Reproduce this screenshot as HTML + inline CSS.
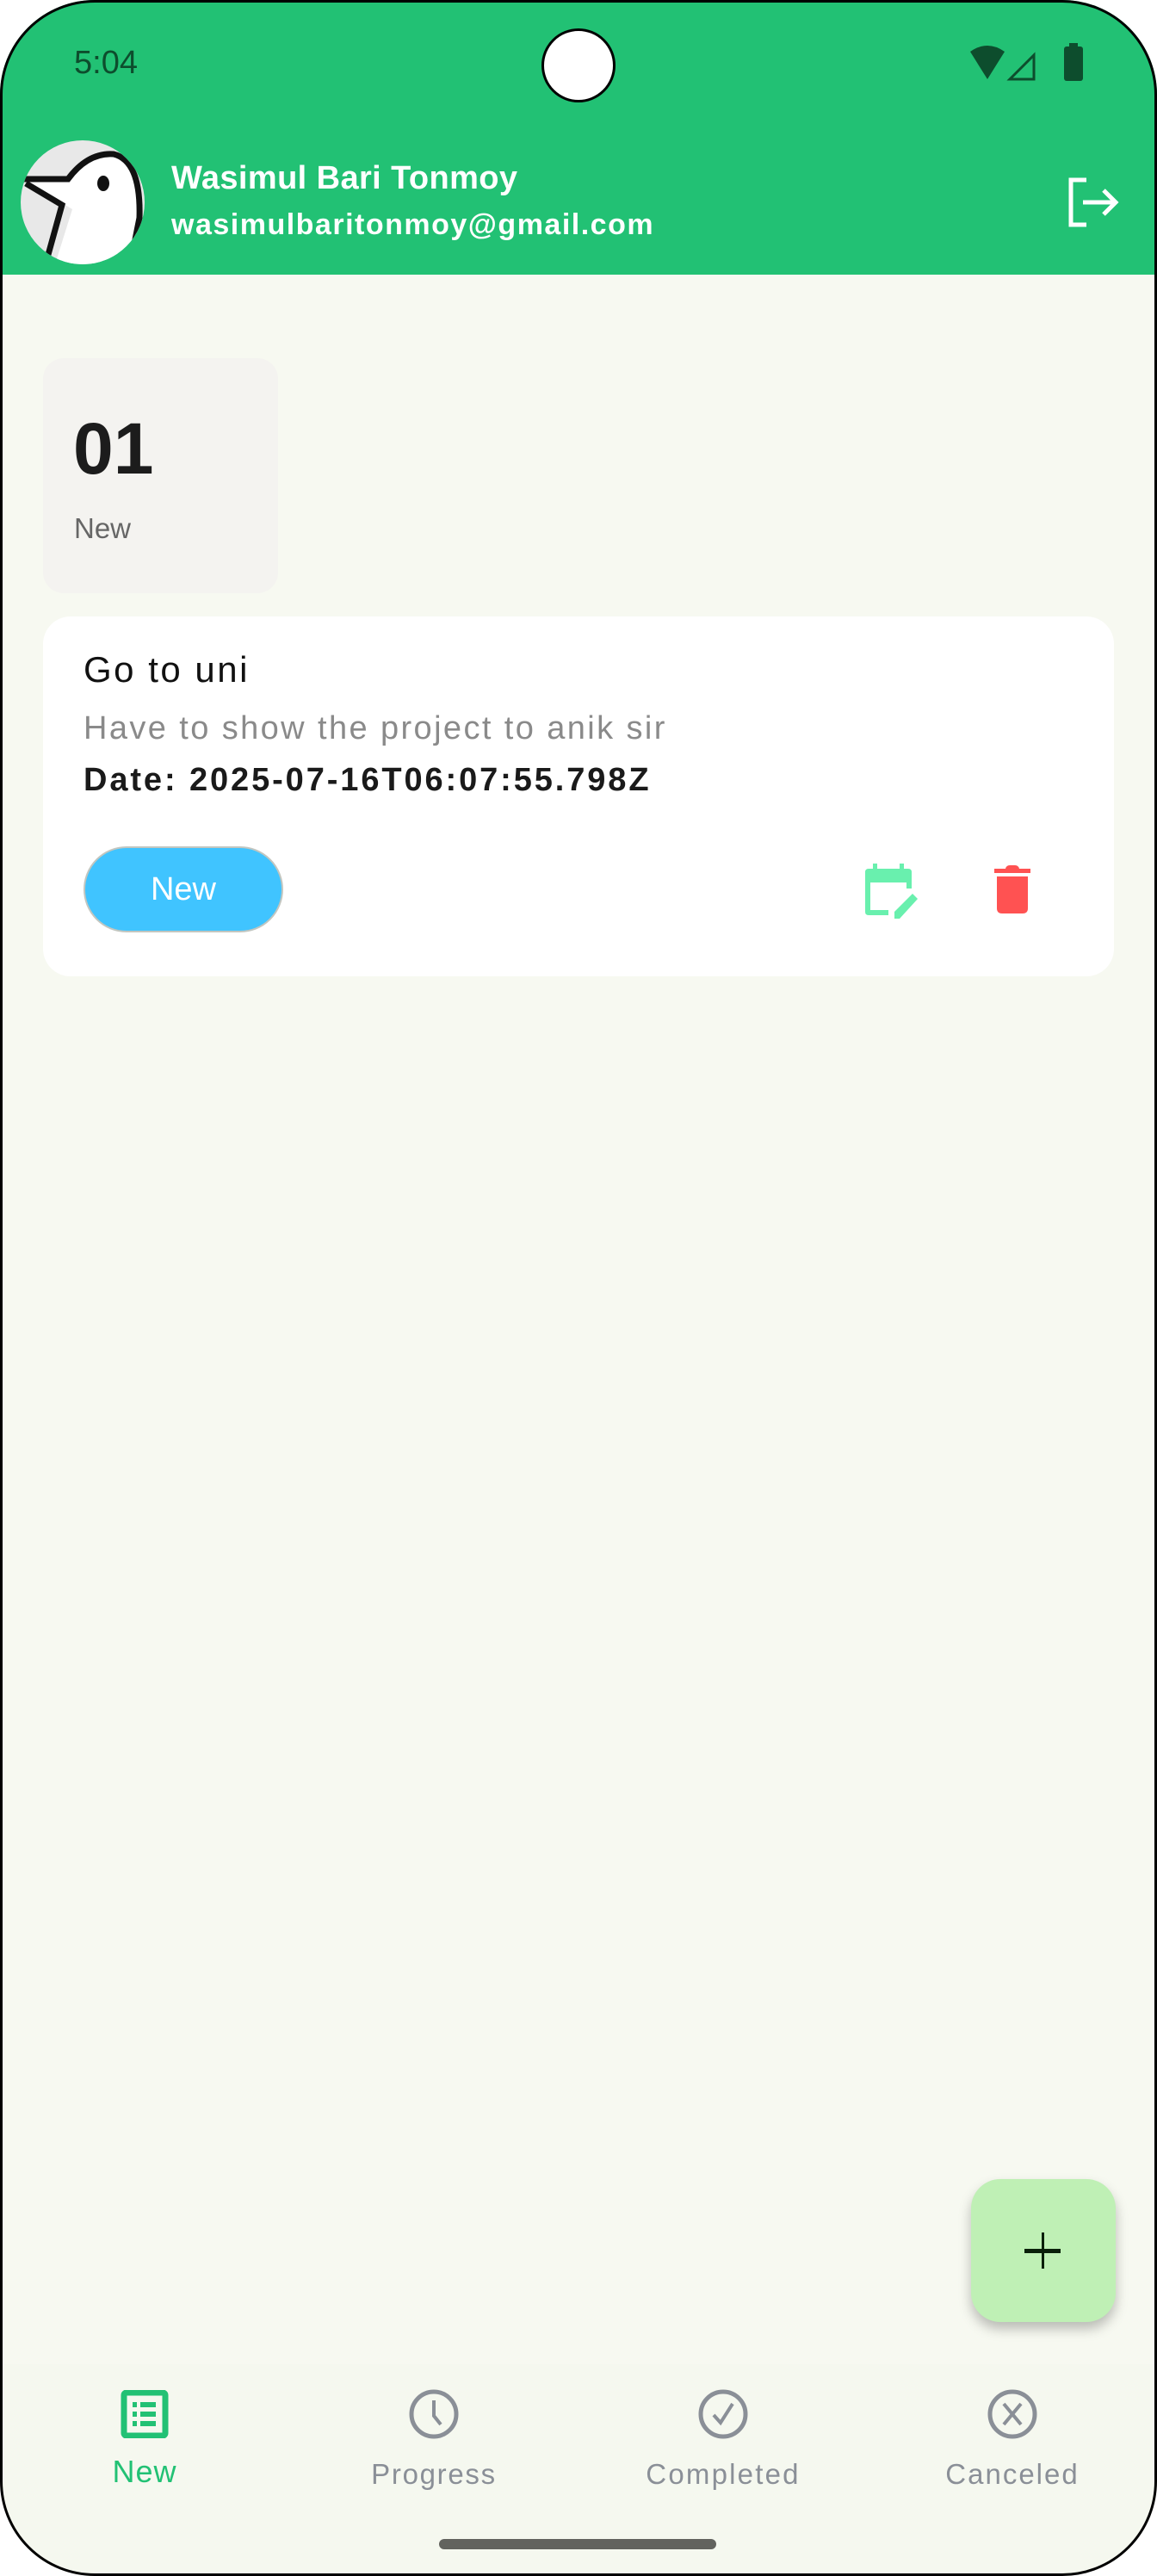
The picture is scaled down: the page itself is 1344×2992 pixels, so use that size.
<!DOCTYPE html>
<html><head><meta charset="utf-8"><style>
*{margin:0;padding:0;box-sizing:border-box}
html,body{width:1344px;height:2992px;background:#fff;overflow:hidden;font-family:"Liberation Sans",sans-serif}
.phone{position:absolute;left:0;top:0;width:1344px;height:2992px;border-radius:110px;overflow:hidden;background:#f7f9f1}
.frame{position:absolute;left:0;top:0;width:1344px;height:2992px;border:3px solid #000;border-radius:110px;pointer-events:none}
.hdr{position:absolute;left:0;top:0;width:1344px;height:319px;background:#22c174}
.t{position:absolute}
</style></head><body>
<div class="phone">
<div class="hdr"></div>
<div class="t" style="left:86px;top:52px;font-size:38px;color:#0d4d2d">5:04</div>
<div class="t" style="left:629px;top:33px;width:86px;height:86px;border-radius:50%;background:#fff;border:3px solid #000"></div>
<svg class="t" style="left:1125px;top:52px" width="90" height="44" viewBox="0 0 90 44">
<path d="M2 8 Q22 -6 42 8 L22 40 Z" fill="#0d4d2d"/>
<path d="M48 40 L76 12 L76 40 Z" fill="none" stroke="#0d4d2d" stroke-width="3"/>
</svg>
<div class="t" style="left:1236px;top:54px;width:22px;height:40px;background:#0d4d2d;border-radius:3px"></div>
<div class="t" style="left:1242px;top:50px;width:10px;height:6px;background:#0d4d2d"></div>
<svg class="t" style="left:24px;top:163px" width="144" height="144" viewBox="0 0 144 144">
<defs><clipPath id="c"><circle cx="72" cy="72" r="72"/></clipPath></defs>
<g clip-path="url(#c)">
<rect width="144" height="144" fill="#e8e8e8"/>
<path d="M6 46 L58 46 Q80 14 110 18 Q140 26 138 90 L130 144 L40 144 L60 80 L10 50 Z" fill="#fff"/>
<path d="M0 45 L55 45 Q78 14 108 16 Q140 24 138 90 L128 140 M6 50 L48 75 L30 140" fill="none" stroke="#111" stroke-width="7"/>
<ellipse cx="96" cy="50" rx="7" ry="9" fill="#111"/>
</g></svg>
<div class="t" style="left:199px;top:186px;font-size:38px;font-weight:bold;color:#fff;letter-spacing:0.4px">Wasimul Bari Tonmoy</div>
<div class="t" style="left:199px;top:242px;font-size:34px;font-weight:bold;color:#fff;letter-spacing:1.5px">wasimulbaritonmoy@gmail.com</div>
<svg class="t" style="left:1240px;top:205px" width="64" height="60" viewBox="0 0 64 60">
<path d="M22 4 H4 V56 H22" fill="none" stroke="#fff" stroke-width="5"/>
<path d="M18 30 H56 M42 16 L56 30 L42 44" fill="none" stroke="#fff" stroke-width="5"/>
</svg>
<div class="t" style="left:50px;top:416px;width:273px;height:273px;border-radius:24px;background:#f4f3f0"></div>
<div class="t" style="left:85px;top:473px;font-size:84px;font-weight:bold;color:#1c1c1c">01</div>
<div class="t" style="left:86px;top:595px;font-size:33px;color:#666">New</div>
<div class="t" style="left:50px;top:716px;width:1244px;height:418px;border-radius:32px;background:#fff"></div>
<div class="t" style="left:97px;top:754px;font-size:42px;color:#111;letter-spacing:2.5px">Go to uni</div>
<div class="t" style="left:97px;top:825px;font-size:38px;color:#8a8a8a;letter-spacing:2.4px">Have to show the project to anik sir</div>
<div class="t" style="left:97px;top:885px;font-size:38px;font-weight:bold;color:#1a1a1a;letter-spacing:2.9px">Date: 2025-07-16T06:07:55.798Z</div>
<div class="t" style="left:97px;top:983px;width:232px;height:100px;border-radius:50px;background:#40c4ff;border:2px solid #c2c6c0;color:#fff;font-size:38px;line-height:96px;text-align:center;font-weight:500">New</div>
<svg class="t" style="left:1005px;top:1003px" width="62" height="64" viewBox="0 0 62 64">
<rect x="9" y="0" width="5" height="10" fill="#69f0ae"/><rect x="40" y="0" width="5" height="10" fill="#69f0ae"/>
<path d="M4 6 H50 Q54 6 54 10 V29 H48 V22 H6 V54 H27 V60 H4 Q0 60 0 56 V10 Q0 6 4 6 Z" fill="#69f0ae"/>
<path d="M34 64 L34 56 L55 35 L61 41 L40 64 Z" fill="#69f0ae"/>
</svg>
<svg class="t" style="left:1155px;top:1005px" width="42" height="56" viewBox="0 0 42 56">
<path d="M0 4 H13 Q14 0 18 0 H24 Q28 0 29 4 H42 V9 H0 Z" fill="#ff5252"/>
<path d="M3 13 H39 V50 Q39 56 33 56 H9 Q3 56 3 50 Z" fill="#ff5252"/>
</svg>
<div class="t" style="left:1128px;top:2531px;width:168px;height:166px;border-radius:34px;background:#bff0b5;box-shadow:0 8px 14px rgba(0,0,0,.25)"></div>
<div class="t" style="left:1210px;top:2593px;width:3px;height:42px;background:#0a200a"></div>
<div class="t" style="left:1190px;top:2612px;width:42px;height:5px;background:#0a200a"></div>
<div class="t" style="left:0;top:2746px;width:1344px;height:246px;background:#f5f8ef"></div>
<svg class="t" style="left:140px;top:2776px" width="56" height="56" viewBox="0 0 56 56">
<rect x="4" y="3" width="48" height="50" rx="3" fill="none" stroke="#22c174" stroke-width="7"/>
<rect x="14" y="14" width="5" height="6" fill="#22c174"/><rect x="23" y="14" width="18" height="6" fill="#22c174"/>
<rect x="14" y="25" width="5" height="6" fill="#22c174"/><rect x="23" y="25" width="18" height="6" fill="#22c174"/>
<rect x="14" y="36" width="5" height="6" fill="#22c174"/><rect x="23" y="36" width="18" height="6" fill="#22c174"/>
</svg>
<svg class="t" style="left:474px;top:2774px" width="60" height="60" viewBox="0 0 60 60"><circle cx="30" cy="30" r="26" fill="none" stroke="#8a8f97" stroke-width="5"/><path d="M30 14 V32 L38 42" fill="none" stroke="#8a8f97" stroke-width="4"/></svg>
<svg class="t" style="left:810px;top:2774px" width="60" height="60" viewBox="0 0 60 60"><circle cx="30" cy="30" r="26" fill="none" stroke="#8a8f97" stroke-width="5"/><path d="M19 31 L27 40 L41 18" fill="none" stroke="#8a8f97" stroke-width="4"/></svg>
<svg class="t" style="left:1146px;top:2774px" width="60" height="60" viewBox="0 0 60 60"><circle cx="30" cy="30" r="26" fill="none" stroke="#8a8f97" stroke-width="5"/><path d="M20 18 L40 42 M40 18 L20 42" fill="none" stroke="#8a8f97" stroke-width="4"/></svg>
<div class="t" style="left:48px;top:2850px;width:240px;text-align:center;font-size:36px;color:#22c174;letter-spacing:1px">New</div>
<div class="t" style="left:384px;top:2855px;width:240px;text-align:center;font-size:33px;color:#8a8f97;letter-spacing:1.7px">Progress</div>
<div class="t" style="left:720px;top:2855px;width:240px;text-align:center;font-size:33px;color:#8a8f97;letter-spacing:2.2px">Completed</div>
<div class="t" style="left:1056px;top:2855px;width:240px;text-align:center;font-size:33px;color:#8a8f97;letter-spacing:2px">Canceled</div>
<div class="t" style="left:510px;top:2949px;width:322px;height:12px;border-radius:6px;background:#62635e"></div>
</div>
<div class="frame"></div>
</body></html>
